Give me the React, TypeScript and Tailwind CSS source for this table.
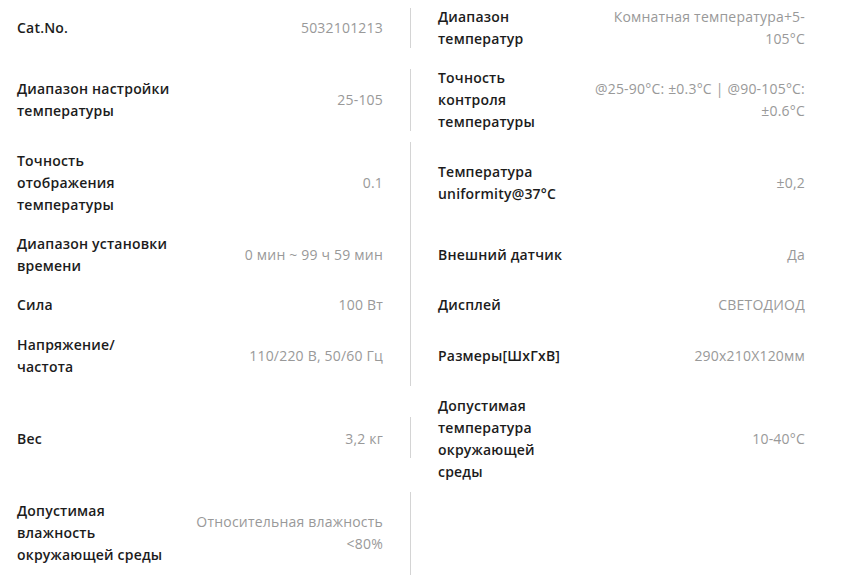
const specs: {
  left: [string, string];
  right: [string, string] | null;
  line: string;
  pad?: string;
}[] = [
  {
    left: ["Cat.No.", "5032101213"],
    right: ["Диапазон температур", "Комнатная температура+5-105°C"],
    line: "mt-[10px] mb-[11px]",
  },
  {
    left: ["Диапазон настройки температуры", "25-105"],
    right: ["Точность контроля температуры", "@25-90°C: ±0.3°C | @90-105°C: ±0.6°C"],
    line: "mt-[10px] mb-[11px]",
  },
  {
    left: ["Точность отображения температуры", "0.1"],
    right: ["Температура uniformity@37°C", "±0,2"],
    line: "mt-0 mb-0",
  },
  {
    left: ["Диапазон установки времени", "0 мин ~ 99 ч 59 мин"],
    right: ["Внешний датчик", "Да"],
    line: "mt-0 mb-0",
  },
  {
    left: ["Сила", "100 Вт"],
    right: ["Дисплей", "СВЕТОДИОД"],
    line: "mt-0 mb-0",
    pad: "pb-[10px]",
  },
  {
    left: ["Напряжение/ частота", "110/220 В, 50/60 Гц"],
    right: ["Размеры[ШхГхВ]", "290x210X120мм"],
    line: "mt-0 mb-px",
  },
  {
    left: ["Вес", "3,2 кг"],
    right: ["Допустимая температура окружающей среды", "10-40°C"],
    line: "mt-[30px] mb-[34px]",
  },
  {
    left: ["Допустимая влажность окружающей среды", "Относительная влажность <80%"],
    right: null,
    line: "mt-0 mb-0",
  },
];

function Cell({ item, labelW }: { item: [string, string] | null; labelW: string }) {
  if (!item) return null;
  return (
    <div className="flex items-center gap-4 w-full">
      <div className={`${labelW} shrink-0 font-semibold text-[#1c1c1c]`}>{item[0]}</div>
      <div className="flex-1 text-right text-[#999999]">{item[1]}</div>
    </div>
  );
}

export default function App() {
  return (
    <div
      className="w-[842px] h-[576px] overflow-hidden bg-white text-[14px] leading-[22px] tracking-[0.2px]"
      style={{ fontFamily: '"Open Sans", "Noto Sans", sans-serif' }}
    >
      <div className="ml-[17px] -mt-[2px] w-[788px]">
        {specs.map((row, i) => (
          <div key={i} className="flex">
            {/* LEFT */}
            <div className={`w-[393px] pr-[27px] pt-2 pb-[9px] flex items-center ${row.pad ?? ""}`}>
              <Cell item={row.left} labelW="w-[155px]" />
            </div>

            <div className={`w-px bg-[#d4d4d4] ${row.line}`} />

            {/* RIGHT */}
            <div className={`w-[394px] pl-[27px] pt-2 pb-[9px] flex items-center ${row.pad ?? ""}`}>
              <Cell item={row.right} labelW="w-[130px]" />
            </div>
          </div>
        ))}
      </div>
    </div>
  );
}
